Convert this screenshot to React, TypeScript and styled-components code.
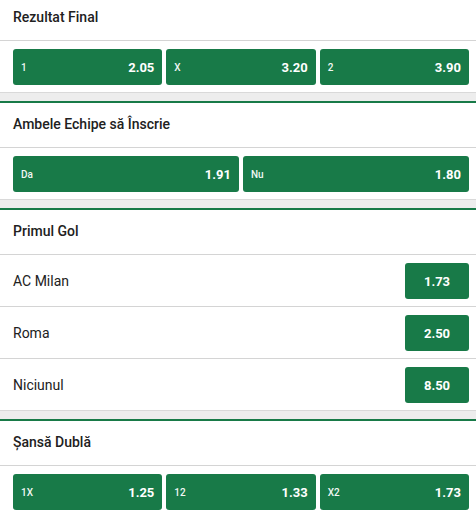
import React from "react";
import styled, { createGlobalStyle } from "styled-components";

const GlobalStyle = createGlobalStyle`
  * { box-sizing: border-box; }
  html, body { margin: 0; padding: 0; background: #ededed; }
  body { font-family: Roboto, "Liberation Sans", Arial, sans-serif; }
`;

const GREEN = "#187a48";

const Page = styled.div`
  display: flex;
  flex-direction: column;
  gap: 8px;
  margin-top: -6px;
  background: #ededed;
`;

const Section = styled.section`
  background: #fff;
  border-top: 2px solid ${GREEN};
  border-bottom: 1px solid #d9d9d9;
`;

const Header = styled.div`
  height: 45px;
  display: flex;
  align-items: center;
  padding: 0 13px 3px;
  border-bottom: 1px solid #d4d4d4;
  font-size: 14px;
  font-weight: 500;
  color: #212121;
`;

const OddsGrid = styled.div`
  display: flex;
  gap: 4px;
  padding: 8px 7px 7px 13px;
`;

const OddButton = styled.button`
  flex: 1;
  height: 36px;
  display: flex;
  align-items: center;
  justify-content: space-between;
  padding: 0 8px 0 8px;
  border: none;
  border-radius: 3px;
  background: ${GREEN};
  color: #fff;
  font-family: inherit;
  cursor: pointer;
`;

const Label = styled.span`
  font-size: 10px;
  font-weight: 500;
  color: #f2f7f4;
`;

const Price = styled.span`
  font-size: 13px;
  font-weight: 700;
`;

const Row = styled.div<{ $last?: boolean }>`
  display: flex;
  align-items: center;
  justify-content: space-between;
  padding: 8px 7px 7px 13px;
  border-bottom: ${(p) => (p.$last ? "none" : "1px solid #d4d4d4")};
`;

const RowName = styled.span`
  font-size: 14px;
  color: #212121;
`;

const RowButton = styled.button`
  width: 64px;
  height: 36px;
  border: none;
  border-radius: 3px;
  background: ${GREEN};
  color: #fff;
  font-family: inherit;
  font-size: 13px;
  font-weight: 700;
  cursor: pointer;
`;

type Odd = { label: string; price: string };

const GridMarket = ({ title, odds }: { title: string; odds: Odd[] }) => (
  <Section>
    <Header>{title}</Header>
    <OddsGrid>
      {odds.map((o) => (
        <OddButton key={o.label}>
          <Label>{o.label}</Label>
          <Price>{o.price}</Price>
        </OddButton>
      ))}
    </OddsGrid>
  </Section>
);

const ListMarket = ({ title, odds }: { title: string; odds: Odd[] }) => (
  <Section>
    <Header>{title}</Header>
    {odds.map((o, i) => (
      <Row key={o.label} $last={i === odds.length - 1}>
        <RowName>{o.label}</RowName>
        <RowButton>{o.price}</RowButton>
      </Row>
    ))}
  </Section>
);

export default function App() {
  return (
    <>
      <GlobalStyle />
      <Page>
        <GridMarket
          title="Rezultat Final"
          odds={[
            { label: "1", price: "2.05" },
            { label: "X", price: "3.20" },
            { label: "2", price: "3.90" },
          ]}
        />
        <GridMarket
          title="Ambele Echipe să Înscrie"
          odds={[
            { label: "Da", price: "1.91" },
            { label: "Nu", price: "1.80" },
          ]}
        />
        <ListMarket
          title="Primul Gol"
          odds={[
            { label: "AC Milan", price: "1.73" },
            { label: "Roma", price: "2.50" },
            { label: "Niciunul", price: "8.50" },
          ]}
        />
        <GridMarket
          title="Șansă Dublă"
          odds={[
            { label: "1X", price: "1.25" },
            { label: "12", price: "1.33" },
            { label: "X2", price: "1.73" },
          ]}
        />
      </Page>
    </>
  );
}
